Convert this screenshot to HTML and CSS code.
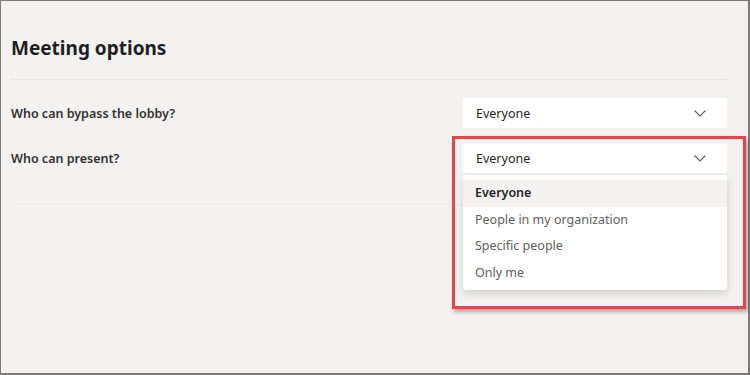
FILE: index.html
```html
<!DOCTYPE html>
<html lang="en">
<head>
    <meta charset="UTF-8">
    <meta name="viewport" content="width=device-width, initial-scale=1.0">
    <title>Meeting options</title>
    <link rel="stylesheet" href="styles.css">
</head>
<body>

    <div class="frame">
        <div class="header">
            <h1>Meeting options</h1>
        </div>

        <!-- Lobby -->
        <div class="row">
            <span class="label">Who can bypass the lobby?</span>
            <div class="dropdown">
                <span>Everyone</span>
                <svg class="chevron" width="12" height="7" viewBox="0 0 12 7"><polyline points="0.5,0.5 6,6 11.5,0.5" fill="none" stroke="#605e5c" stroke-width="1.1"/></svg>
            </div>
        </div>

        <!-- Presenters, open -->
        <div class="row second">
            <span class="label">Who can present?</span>
            <div class="dropdown open">
                <span>Everyone</span>
                <svg class="chevron" width="12" height="7" viewBox="0 0 12 7"><polyline points="0.5,0.5 6,6 11.5,0.5" fill="none" stroke="#605e5c" stroke-width="1.1"/></svg>

                <ul class="menu">
                    <li class="selected">Everyone</li>
                    <li>People in my organization</li>
                    <li>Specific people</li>
                    <li>Only me</li>
                </ul>

                <div class="highlight"></div>
            </div>
        </div>

        <div class="divider"></div>
    </div>

</body>
</html>
```

FILE: styles.css
```css
* {
    box-sizing: border-box;
}

body {
    margin: 0;
    font-family: "Noto Sans", "Open Sans", sans-serif;
    color: #252423;
}

.frame {
    width: 750px;
    height: 375px;
    border: 1.5px solid #7a7a7a;
    border-right-width: 2px;
    border-bottom-width: 2px;
    background-color: #f3f2f1;
    padding: 0 21px 0 10px;
}

.header {
    height: 79px;
    padding-top: 35px;
    border-bottom: 1px solid #e8e6e4;
}

h1 {
    margin: 0;
    font-size: 19px;
    line-height: 24px;
    font-weight: 700;
    color: #1f1f1f;
}

.row {
    display: flex;
    justify-content: space-between;
    align-items: center;
    height: 30px;
    margin-top: 18px;
}

.row.second {
    margin-top: 15px;
}

.label {
    font-size: 12.5px;
    font-weight: 600;
    color: #323130;
}

.dropdown {
    position: relative;
    width: 264px;
    height: 30px;
    background-color: #fff;
    border-radius: 2px;
    display: flex;
    align-items: center;
    justify-content: space-between;
    padding: 0 21px 0 13px;
    font-size: 12.5px;
}

.chevron {
    display: block;
}

.menu {
    position: absolute;
    top: 32px;
    left: 0;
    width: 264px;
    margin: 0;
    padding: 5px 0 4px;
    list-style: none;
    background-color: #fff;
    border-radius: 2px;
    box-shadow: 0 3px 8px rgba(0, 0, 0, 0.14);
    z-index: 2;
}

.menu li {
    height: 26.5px;
    line-height: 26.5px;
    padding: 0 12px;
    font-size: 12.5px;
    color: #605e5c;
}

.menu li.selected {
    background-color: #f3f2f1;
    color: #252423;
    font-weight: 600;
}

.highlight {
    position: absolute;
    top: -7px;
    left: -11px;
    width: 294px;
    height: 173px;
    border: 3px solid #e0464c;
    box-shadow: 2px 3px 4px rgba(0, 0, 0, 0.3);
    z-index: 3;
    pointer-events: none;
}

.divider {
    margin-top: 31px;
    border-top: 1px solid #ebe9e7;
}
```
